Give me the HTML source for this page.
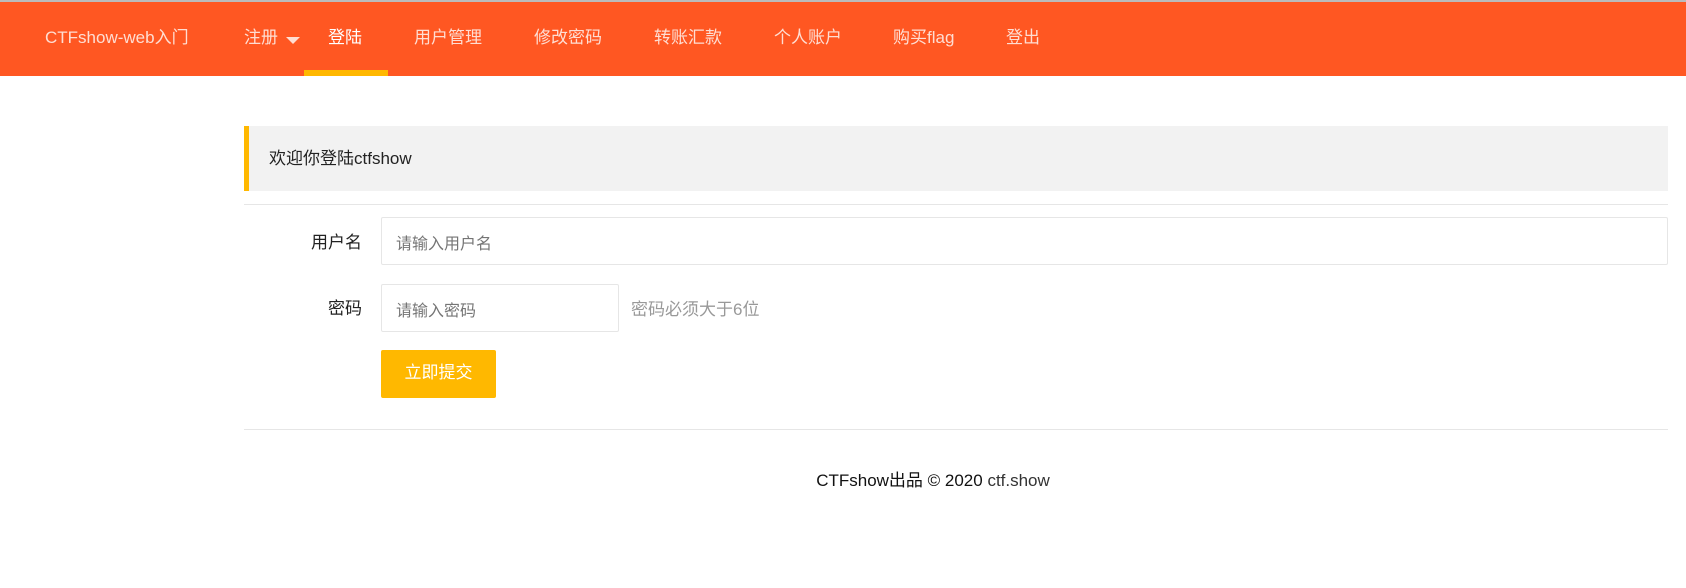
<!DOCTYPE html>
<html><head><meta charset="utf-8"><style>
*{margin:0;padding:0;box-sizing:border-box}
body{width:1686px;height:588px;background:#fff;position:relative;overflow:hidden;font-family:"Liberation Sans","Noto Sans CJK SC",sans-serif;}
.nav{position:absolute;left:0;top:0;width:1686px;height:76px;background:#FF5722;border-top:2px solid #bbb}
.nav span{position:absolute;top:26px;font-size:17px;color:rgba(255,255,255,.8);white-space:nowrap;line-height:20px}
.nav .on{color:#fff}
.bar{position:absolute;left:304px;top:70px;width:84px;height:6px;background:#FFB800}
.tri{position:absolute;left:286px;top:35px;width:0;height:0;border-left:7px solid transparent;border-right:7px solid transparent;border-top:7px solid rgba(255,255,255,.8)}
.abs{position:absolute}
.quote{left:244px;top:126px;width:1424px;height:65px;background:#f2f2f2;border-left:5px solid #FFB800}
.quote span{position:absolute;left:20px;top:18px;font-size:17px;color:#222}
.hr{left:244px;width:1424px;height:1px;background:#e6e6e6}
.label{font-size:17px;color:#222;text-align:right;width:120px}
.input{border:1px solid #e6e6e6;border-radius:2px;background:#fff}
.input span{position:absolute;left:14px;top:12px;font-size:16px;color:#757575}
</style></head><body>
<div class="nav">
<span style="left:45px">CTFshow-web入门</span>
<span style="left:244px">注册</span>
<span class="on" style="left:328px">登陆</span>
<span style="left:414px">用户管理</span>
<span style="left:534px">修改密码</span>
<span style="left:654px">转账汇款</span>
<span style="left:774px">个人账户</span>
<span style="left:893px">购买flag</span>
<span style="left:1006px">登出</span>
<div class="tri"></div>
</div>
<div class="bar"></div>
<div class="abs quote"><span>欢迎你登陆ctfshow</span></div>
<div class="abs hr" style="top:204px"></div>
<div class="abs label" style="left:242px;top:228px">用户名</div>
<div class="abs input" style="left:381px;top:217px;width:1287px;height:48px"><span>请输入用户名</span></div>
<div class="abs label" style="left:242px;top:294px">密码</div>
<div class="abs input" style="left:381px;top:284px;width:238px;height:48px"><span>请输入密码</span></div>
<div class="abs" style="left:631px;top:295px;font-size:17px;color:#999">密码必须大于6位</div>
<div class="abs" style="left:381px;top:350px;width:115px;height:48px;background:#FFB800;border-radius:2px;color:#fff;font-size:17px;text-align:center;line-height:46px">立即提交</div>
<div class="abs hr" style="top:429px"></div>
<div class="abs" style="left:0;width:1866px;text-align:center;top:466px;font-size:17px;color:#111">CTFshow出品 © 2020 <span style="color:#333">ctf.show</span></div>
</body></html>
